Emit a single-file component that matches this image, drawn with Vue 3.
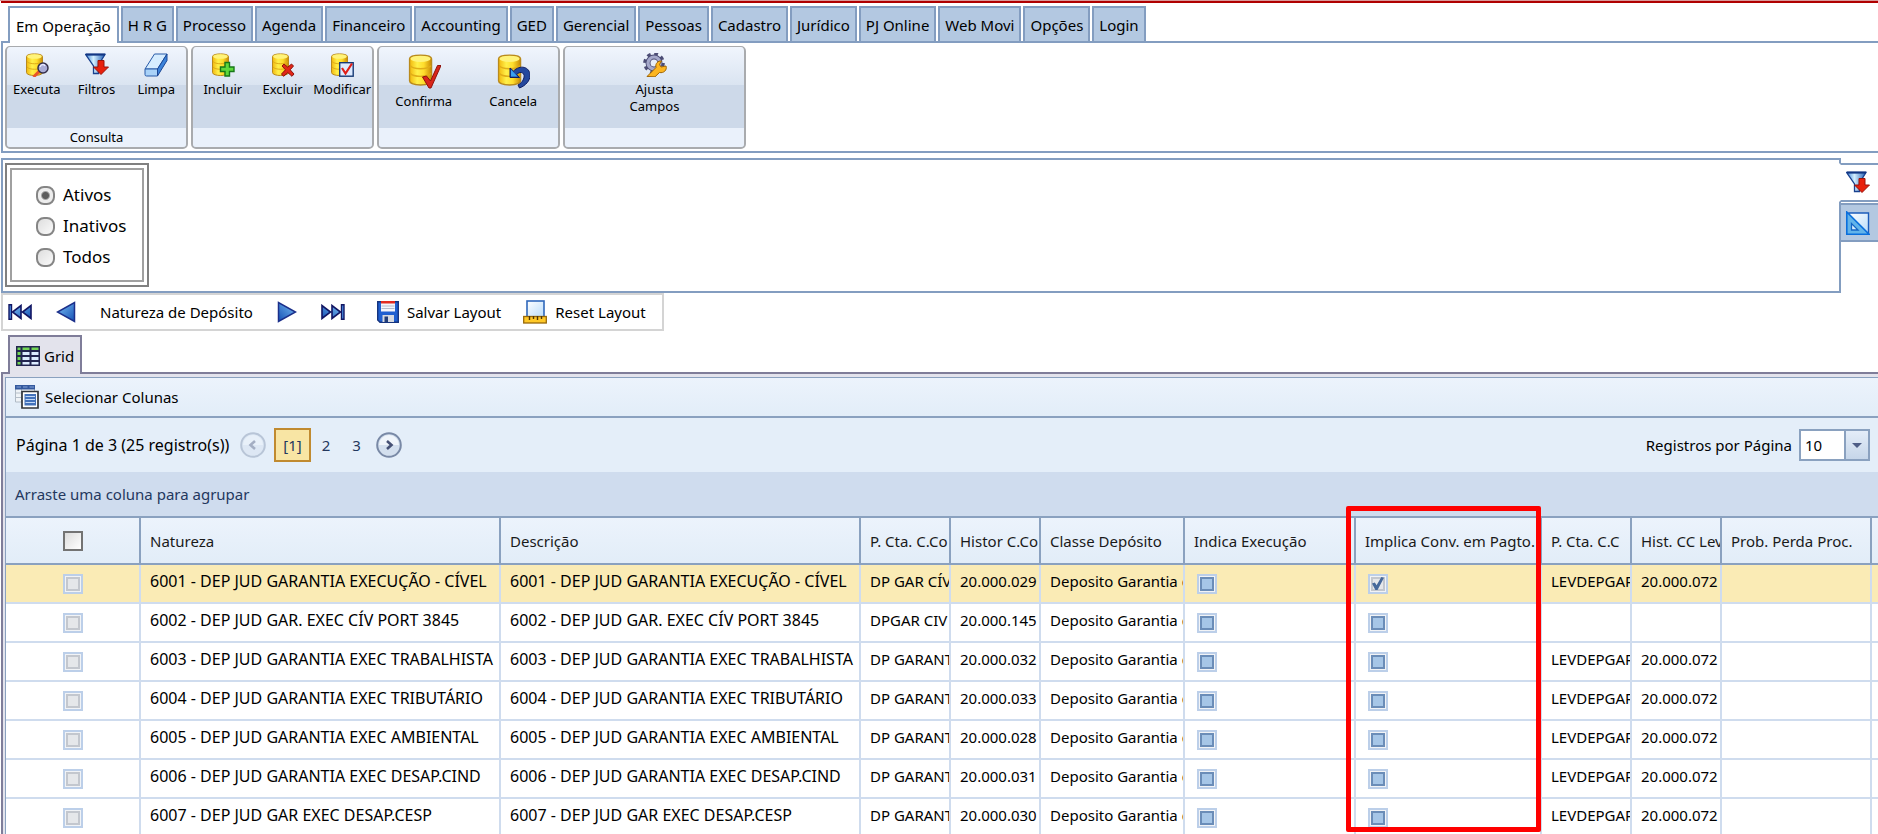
<template>
  <div class="page">
    <svg class="sprite" width="0" height="0" aria-hidden="true">
      <defs>
        <linearGradient id="gold" x1="0" x2="1" y1="0" y2="0">
          <stop offset="0" stop-color="#f2b70d" />
          <stop offset="0.35" stop-color="#fff04a" />
          <stop offset="0.65" stop-color="#ffdd2c" />
          <stop offset="1" stop-color="#c98a05" />
        </linearGradient>
        <linearGradient id="blue" x1="0" x2="1" y1="0" y2="1">
          <stop offset="0" stop-color="#7cc0f5" />
          <stop offset="1" stop-color="#1450b4" />
        </linearGradient>
        <linearGradient id="cone" x1="0" x2="1" y1="0" y2="0">
          <stop offset="0" stop-color="#3f86d8" />
          <stop offset="0.4" stop-color="#d3efff" />
          <stop offset="1" stop-color="#1f5db4" />
        </linearGradient>
        <linearGradient id="sheet" x1="0" x2="1" y1="0" y2="1">
          <stop offset="0" stop-color="#ffffff" />
          <stop offset="1" stop-color="#b9dcfa" />
        </linearGradient>
        <symbol id="i-db" viewBox="0 0 24 24">
          <path d="M1.5 3.500C1.500 0 17.500 0 17.500 3.500V19.500C17.500 23.500 1.500 23.500 1.500 19.500Z" fill="url(#gold)" stroke="#b98a1c" />
          <ellipse cx="9.500" cy="3.500" rx="7.300" ry="2.300" fill="#fff37a" />
          <path d="M2 8.500C4 11.500 15 11.500 17 8.500M2 14C4 17 15 17 17 14" fill="none" stroke="#e0ad18" />
        </symbol>
        <symbol id="i-executa" viewBox="0 0 24 24">
          <use href="#i-db" width="24" height="24" />
          <path d="M8.500 24 15 17.500" stroke="#e8542a" stroke-width="3" />
          <circle cx="18" cy="15" r="5" fill="#a9acd6" stroke="#35304a" stroke-width="1.500" />
          <path d="M15 14c1-3 4-3 5-1" fill="none" stroke="#e6e8ff" stroke-width="1.500" />
        </symbol>
        <symbol id="i-filtros" viewBox="0 0 24 24">
          <path d="M.7 1.500H20L13.500 12V20.500H8.500V13Z" fill="url(#cone)" stroke="#19418f" stroke-width="1.300" />
          <path d="M1 1.500H20" stroke="#123683" stroke-width="2" />
          <path d="M13 7.500h6V14h4.500L16 21.500 8.500 14H13Z" fill="#e8200c" stroke="#98120a" />
        </symbol>
        <symbol id="i-limpa" viewBox="0 0 24 24">
          <path d="M10.500 1H23L13.500 16H1Z" fill="#d5ecff" stroke="#285aa8" />
          <path d="M1 16h12.500v7H2.500Q1 23 1 21.500Z" fill="#a9d2f8" stroke="#285aa8" />
          <path d="M23 1v6.500L13.500 23v-7Z" fill="#3c83da" stroke="#1b4795" />
        </symbol>
        <symbol id="i-incluir" viewBox="0 0 24 24">
          <use href="#i-db" width="24" height="24" />
          <path d="M14 9.500h4.500V14H23v4.500h-4.500V23H14v-4.500H9.500V14H14Z" fill="#5ed83b" stroke="#167818" stroke-width="1.400" />
        </symbol>
        <symbol id="i-excluir" viewBox="0 0 24 24">
          <use href="#i-db" width="24" height="24" />
          <path d="m11 13 2-2 3.800 3.200L20.500 11l2 2-3.300 3.800L23 21l-2 2.300-4.200-3.700-4.300 3.700-2-2.300 4-4.200Z" fill="#e12617" stroke="#8c120b" />
        </symbol>
        <symbol id="i-modificar" viewBox="0 0 24 24">
          <use href="#i-db" width="24" height="24" />
          <rect x="9.700" y="9.700" width="13.500" height="13.500" fill="#dceaff" stroke="#173a75" stroke-width="1.400" />
          <path d="m12 15 3.500 5.500L22 10.500" fill="none" stroke="#e01f18" stroke-width="2.200" />
        </symbol>
        <symbol id="i-confirma" viewBox="0 0 34 34">
          <use href="#i-db" width="34" height="33" />
          <path d="m15.500 23 4-1 4 5L30.500 11.500h3.500L24 34h-2Z" fill="#d9251a" stroke="#8f120c" />
        </symbol>
        <symbol id="i-cancela" viewBox="0 0 34 34">
          <use href="#i-db" width="34" height="33" />
          <path d="M14 14v9.500h9.500l-2.800-3C25 16 30 19.500 27.500 25c-1 3-3 4.500-5.500 6l1.500 3C30 31.500 34 26.500 34 21.500 34 12.500 24 10.500 17.500 17Z" fill="#24489e" stroke="#101f63" />
          <path d="M15 15.500v7h6.500Z" fill="#39a0f1" />
        </symbol>
        <symbol id="i-ajusta" viewBox="0 0 24 24">
          <circle cx="11" cy="10" r="8.800" fill="none" stroke="#4c4d75" stroke-width="4" stroke-dasharray="3.500 3.400" />
          <circle cx="11" cy="10" r="6" fill="none" stroke="#4c4d75" stroke-width="5" />
          <circle cx="11" cy="10" r="6" fill="none" stroke="#a4a8ca" stroke-width="3.200" />
          <path d="M4 23.500 13 14.500c-1-4 2-7 5.500-6.500L16.500 11.500l1.500 2.500 5-1c1.500 4-2.500 7.500-6.500 6.500L12 23.800Z" fill="#fcb520" stroke="#9f6505" />
        </symbol>
        <symbol id="i-first" viewBox="0 0 24 16">
          <path d="M1 .8h2.500v14.400H1Z" fill="#4a92e6" stroke="#121663" stroke-width="1.400" />
          <path d="M13 1.500v13L4.500 8ZM23 1.500v13L14.500 8Z" fill="url(#blue)" stroke="#121663" stroke-width="1.600" />
        </symbol>
        <symbol id="i-prev" viewBox="0 0 20 22">
          <path d="M18.500 1.500v19L1.500 11Z" fill="url(#blue)" stroke="#1b2f8a" stroke-width="1.500" />
        </symbol>
        <symbol id="i-save" viewBox="0 0 22 22">
          <path d="M.7.7h20.600v20.600H3L.7 19Z" fill="#1f5fd0" stroke="#16347e" stroke-width="1.400" />
          <path d="M4 2h14v8.500H4Z" fill="#f3f5fb" />
          <path d="M4 0h14v2.500H4Z" fill="#e22a20" />
          <path d="M4.500 5h13M4.500 7.500h13" stroke="#b5bbcc" />
          <path d="M5.500 14h11.500v7H5.500Z" fill="#d5d9e0" />
          <path d="M7.500 15.500h3.500V21H7.500Z" fill="#223d78" />
        </symbol>
        <symbol id="i-reset" viewBox="0 0 24 24">
          <rect x="4" y="1" width="17" height="16" fill="url(#sheet)" stroke="#3068bb" stroke-width="1.600" />
          <rect x=".7" y="16.500" width="22.600" height="6.500" fill="#ffc928" stroke="#98690a" stroke-width="1.300" />
          <path d="M6.500 16v4M10.500 16v3M14.500 16v4M18.500 16v3" stroke="#4e3508" stroke-width="1.400" />
        </symbol>
        <symbol id="i-grid" viewBox="0 0 24 20">
          <path d="M0 0h24v20H0Z" fill="#22254f" />
          <path d="M1.500 1.500h3V4h-3Zm0 4.500h3v3h-3Zm0 5h3v3h-3Zm0 5h3v2.500h-3ZM6.500 1.500h7V4h-7Zm9 0h7V4h-7Z" fill="#72d455" />
          <path d="M6.500 6h7v3h-7Zm9 0h7v3h-7Zm-9 5h7v3h-7Zm9 0h7v3h-7Zm-9 5h7v2.500h-7Zm9 0h7v2.500h-7Z" fill="#dcecff" />
        </symbol>
        <symbol id="i-cols" viewBox="0 0 24 24">
          <path d="M.5.500h19V17H.5Z" fill="#eff3f7" stroke="#b0bac5" />
          <path d="M.5 8h19M.5 12.500h19M6.500 4v13" stroke="#b5bfca" />
          <path d="M0 0h20v4.500H0Z" fill="#34599d" />
          <path d="M1.500 2H6m2 0h4.500m2 0H19" stroke="#86a6db" />
          <path d="M7 6.500h16V23H7Z" fill="#ffffff" stroke="#30343a" stroke-width="1.700" />
          <path d="M9.500 9h11.500v11.500H9.500Z" fill="#4372ba" />
          <path d="M10.500 11.500h9.500m-9.500 3h9.500m-9.500 3h9.500" stroke="#c3d9f8" />
        </symbol>
        <symbol id="i-ruler" viewBox="0 0 24 24">
          <path d="M3 2h19.500v20H3Z" fill="url(#sheet)" stroke="#1c5cbb" stroke-width="1.400" />
          <path d="M.8 1v22.200H23Z" fill="#62b4ea" stroke="#0a6fdc" stroke-width="1.600" />
          <path d="M5.500 12.500v6.500h6.500Z" fill="#d9effe" stroke="#1565c4" stroke-width="1.300" />
        </symbol>
        <symbol id="i-arrow" viewBox="0 0 26 26">
          <circle cx="13" cy="13" r="11.800" fill="#d3dfee" stroke="#7989a6" stroke-width="2" />
          <path d="M3 13a10 10 0 0 1 20 0Z" fill="#f0f5fb" />
          <path d="m11 9 4.500 4-4.500 4" fill="none" stroke="#465175" stroke-width="2.600" />
        </symbol>
      </defs>
    </svg>

    <nav class="tabs">
      <button
        v-for="(tab, index) in tabs"
        :key="tab"
        type="button"
        class="tab"
        :class="{ active: index === activeTab }"
        @click="activeTab = index"
      >{{ tab }}</button>
    </nav>

    <div class="ribbon">
      <section v-for="(group, index) in groups" :key="index" class="ribbon-group">
        <div class="ribbon-items">
          <button
            v-for="item in group.items"
            :key="item.label"
            type="button"
            class="ribbon-item"
            :class="{ large: group.large }"
          >
            <svg class="ribbon-icon" aria-hidden="true"><use :href="'#i-' + item.icon" /></svg>
            <span>{{ item.label }}</span>
          </button>
        </div>
        <div class="ribbon-title">{{ group.title }}</div>
      </section>
    </div>

    <div class="filter">
      <div class="filter-body">
        <div class="filter-frame">
          <div class="filter-options">
            <label v-for="option in options" :key="option" class="option">
              <input v-model="situation" type="radio" name="situation" :value="option">
              <span>{{ option }}</span>
            </label>
          </div>
        </div>
      </div>
      <div class="side-tabs">
        <button type="button" class="side-tab active" aria-label="Filtros">
          <svg width="24" height="24"><use href="#i-filtros" /></svg>
        </button>
        <button type="button" class="side-tab" aria-label="Layout">
          <svg width="24" height="24"><use href="#i-ruler" /></svg>
        </button>
      </div>
    </div>

    <div class="navigator">
      <button type="button" aria-label="Primeiro"><svg width="24" height="16"><use href="#i-first" /></svg></button>
      <button type="button" aria-label="Anterior"><svg width="20" height="22"><use href="#i-prev" /></svg></button>
      <span class="nav-title">Natureza de Depósito</span>
      <button type="button" aria-label="Próximo"><svg class="flip" width="20" height="22"><use href="#i-prev" /></svg></button>
      <button type="button" aria-label="Último"><svg class="flip" width="24" height="16"><use href="#i-first" /></svg></button>
      <div class="nav-actions">
        <button type="button" class="nav-action">
          <svg width="22" height="22"><use href="#i-save" /></svg>
          <span>Salvar Layout</span>
        </button>
        <button type="button" class="nav-action">
          <svg width="24" height="24"><use href="#i-reset" /></svg>
          <span>Reset Layout</span>
        </button>
      </div>
    </div>

    <button type="button" class="grid-tab">
      <svg width="24" height="20"><use href="#i-grid" /></svg>
      <span>Grid</span>
    </button>

    <div class="grid-panel">
      <div class="grid">
        <div class="toolbar">
          <button type="button">
            <svg width="24" height="24"><use href="#i-cols" /></svg>
            <span>Selecionar Colunas</span>
          </button>
        </div>

        <div class="pager">
          <span class="pager-info">Página 1 de 3 (25 registro(s))</span>
          <button type="button" class="round" aria-label="Página anterior" disabled>
            <svg class="flip" width="26" height="26"><use href="#i-arrow" /></svg>
          </button>
          <a href="#" class="page-link current">[1]</a>
          <a href="#" class="page-link">2</a>
          <a href="#" class="page-link">3</a>
          <button type="button" class="round" aria-label="Próxima página">
            <svg width="26" height="26"><use href="#i-arrow" /></svg>
          </button>
          <label class="page-size-label" for="page-size">Registros por Página</label>
          <div class="page-size">
            <select id="page-size" v-model="pageSize">
              <option v-for="size in [10, 25, 50]" :key="size" :value="size">{{ size }}</option>
            </select>
            <span class="page-size-arrow"></span>
          </div>
        </div>

        <div class="group-panel">Arraste uma coluna para agrupar</div>

        <div class="table-area">
          <table>
            <colgroup>
              <col class="w-select">
              <col class="w-name">
              <col class="w-name">
              <col class="w-code">
              <col class="w-code">
              <col class="w-class">
              <col class="w-exec">
              <col class="w-conv">
              <col class="w-code">
              <col class="w-code">
              <col class="w-prob">
              <col>
            </colgroup>
            <thead>
              <tr>
                <th class="select-cell"><input type="checkbox" class="check-all" aria-label="Selecionar todos"></th>
                <th v-for="column in columns" :key="column" scope="col">{{ column }}</th>
                <th></th>
              </tr>
            </thead>
            <tbody>
              <tr v-for="(row, index) in rows" :key="row.name" :class="{ focused: index === 0 }">
                <td class="select-cell"><input type="checkbox" class="check" :aria-label="'Selecionar ' + row.name"></td>
                <td class="name-cell">{{ row.name }}</td>
                <td class="name-cell">{{ row.name }}</td>
                <td>{{ row.account }}</td>
                <td>{{ row.history }}</td>
                <td>Deposito Garantia d</td>
                <td class="check-cell"><input type="checkbox" class="check" :indeterminate="true" aria-label="Indica Execução"></td>
                <td class="check-cell">
                  <input
                    type="checkbox"
                    class="check"
                    :checked="row.converts"
                    :indeterminate="!row.converts"
                    aria-label="Implica Conv. em Pagto."
                  >
                </td>
                <td>{{ row.releaseAccount }}</td>
                <td>{{ row.releaseHistory }}</td>
                <td></td>
                <td></td>
              </tr>
            </tbody>
          </table>
          <div class="highlight"></div>
        </div>
      </div>
    </div>
  </div>
</template>

<script setup>
import { ref } from 'vue'

const activeTab = ref(0)
const situation = ref('Ativos')
const pageSize = ref(10)

const tabs = [
  'Em Operação', 'H R G', 'Processo', 'Agenda', 'Financeiro', 'Accounting', 'GED', 'Gerencial',
  'Pessoas', 'Cadastro', 'Jurídico', 'PJ Online', 'Web Movi', 'Opções', 'Login'
]

const options = ['Ativos', 'Inativos', 'Todos']

const groups = [
  {
    title: 'Consulta',
    items: [
      { label: 'Executa', icon: 'executa' },
      { label: 'Filtros', icon: 'filtros' },
      { label: 'Limpa', icon: 'limpa' }
    ]
  },
  {
    title: '',
    items: [
      { label: 'Incluir', icon: 'incluir' },
      { label: 'Excluir', icon: 'excluir' },
      { label: 'Modificar', icon: 'modificar' }
    ]
  },
  {
    title: '',
    large: true,
    items: [
      { label: 'Confirma', icon: 'confirma' },
      { label: 'Cancela', icon: 'cancela' }
    ]
  },
  {
    title: '',
    items: [{ label: 'Ajusta\nCampos', icon: 'ajusta' }]
  }
]

const columns = [
  'Natureza', 'Descrição', 'P. Cta. C.Co', 'Histor C.Co', 'Classe Depósito', 'Indica Execução',
  'Implica Conv. em Pagto.', 'P. Cta. C.C', 'Hist. CC Lev', 'Prob. Perda Proc.'
]

const makeRow = (name, account, history, converts = false, released = true) => ({
  name,
  account,
  history,
  converts,
  releaseAccount: released ? 'LEVDEPGAR' : '',
  releaseHistory: released ? '20.000.072' : ''
})

const rows = [
  makeRow('6001 - DEP JUD GARANTIA EXECUÇÃO - CÍVEL', 'DP GAR CÍV', '20.000.029', true),
  makeRow('6002 - DEP JUD GAR. EXEC CÍV PORT 3845', 'DPGAR CIV', '20.000.145', false, false),
  makeRow('6003 - DEP JUD GARANTIA EXEC TRABALHISTA', 'DP GARANT', '20.000.032'),
  makeRow('6004 - DEP JUD GARANTIA EXEC TRIBUTÁRIO', 'DP GARANT', '20.000.033'),
  makeRow('6005 - DEP JUD GARANTIA EXEC AMBIENTAL', 'DP GARANT', '20.000.028'),
  makeRow('6006 - DEP JUD GARANTIA EXEC DESAP.CIND', 'DP GARANT', '20.000.031'),
  makeRow('6007 - DEP JUD GAR EXEC DESAP.CESP', 'DP GARANT', '20.000.030')
]
</script>

<style>
body {
  margin: 0;
  background: #ffffff;
}
</style>

<style scoped>
.page {
  box-sizing: border-box;
  height: 100vh;
  overflow: hidden;
  padding-left: 1px;
  border-top: 1px solid #d99a9a;
  background: #ffffff;
  color: #000000;
  font-family: Tahoma, "Noto Sans", sans-serif;
  font-size: 15px;
  line-height: 20px;
}

.page *,
.page *::before {
  box-sizing: border-box;
}

.sprite {
  position: absolute;
}

button {
  border: 0;
  padding: 0;
  background: none;
  color: inherit;
  cursor: pointer;
  font: inherit;
}

svg {
  display: block;
  flex: none;
}

.flip {
  transform: scaleX(-1);
}

.tabs {
  display: flex;
  gap: 2px;
  padding: 3px 0 0 7px;
  border-top: 2px solid #b00000;
  border-bottom: 2px solid #839dc0;
}

.tab {
  height: 35px;
  border: 2px solid #839dc0;
  border-bottom: 0;
  padding: 0 5px;
  background: #b3c8e1;
  white-space: nowrap;
}

.tab.active {
  position: relative;
  height: 37px;
  margin-bottom: -2px;
  padding: 0 6px;
  background: #ffffff;
}

.ribbon {
  display: flex;
  gap: 3px;
  padding: 3px 2px 2px;
  border-bottom: 2px solid #839dc0;
  border-left: 2px solid #839dc0;
}

.ribbon-group {
  width: 183px;
  overflow: hidden;
  border: 2px solid #a9abae;
  border-top-width: 1px;
  border-radius: 5px;
  background: linear-gradient(#f0f5fd, #dae4f1 38px, #cdd9e9 38px);
  font-size: 13px;
  line-height: 17px;
}

.ribbon-items {
  display: flex;
  height: 81px;
}

.ribbon-item {
  display: flex;
  flex: 1 1 0;
  min-width: 0;
  flex-direction: column;
  align-items: center;
  padding-top: 6px;
  white-space: pre;
}

.ribbon-icon {
  width: 24px;
  height: 24px;
  margin-bottom: 4px;
}

.large .ribbon-icon {
  width: 34px;
  height: 36px;
}

.ribbon-title {
  height: 19px;
  background: #eaf1fb;
  line-height: 19px;
  text-align: center;
}

.filter {
  display: flex;
  margin-top: 5px;
}

.filter-body {
  flex: 1;
  padding: 3px 2px 4px;
  border: 2px solid #839dc0;
}

.filter-frame {
  width: 144px;
  padding: 3px;
  border: 2px solid #808080;
}

.filter-options {
  display: grid;
  gap: 11px;
  padding: 15px 24px 13px;
  border: 2px solid #a0a0a0;
  font-size: 17px;
}

.option {
  display: flex;
  align-items: center;
  gap: 8px;
}

.option input {
  flex: none;
  width: 19px;
  height: 19px;
  margin: 0;
  border: 2px solid #858585;
  border-radius: 8px;
  appearance: none;
  background: linear-gradient(135deg, #dedede, #fafafa);
}

.option input:checked {
  background: radial-gradient(circle, #5c5c5c 3px, #ededed 5px);
}

.side-tabs {
  display: grid;
  flex: 0 0 39px;
  align-content: start;
  gap: 1px;
  margin-left: -2px;
  padding-top: 5px;
}

.side-tab {
  position: relative;
  height: 39px;
  padding-left: 5px;
  border: 2px solid #839dc0;
  border-right: 0;
  background: #b3c8e1;
}

.side-tab.active {
  border-left-color: #ffffff;
  background: #ffffff;
}

.navigator {
  display: flex;
  align-items: center;
  width: max-content;
  height: 38px;
  padding: 0 16px 0 5px;
  border: 2px solid #d4d4d4;
  gap: 24px;
}

.nav-title {
  white-space: nowrap;
}

.nav-actions {
  display: flex;
  gap: 22px;
  margin-left: 8px;
}

.nav-action {
  display: flex;
  align-items: center;
  gap: 8px;
  white-space: nowrap;
}

.grid-tab {
  position: relative;
  display: flex;
  align-items: center;
  gap: 4px;
  height: 39px;
  margin: 4px 0 -2px 7px;
  padding: 0 6px;
  border: 2px solid #7f7d99;
  border-bottom: 0;
  background: #e3e3ec;
}

.grid-panel {
  padding: 3px 0 0 2px;
  border-top: 2px solid #7f7d99;
  border-left: 2px solid #7f7d99;
  background: #e3e3ec;
}

.grid {
  border-top: 1px solid #8aa1bf;
  border-left: 1px solid #8aa1bf;
}

.toolbar {
  padding: 7px 9px;
  border-bottom: 2px solid #8aa1bf;
  background: linear-gradient(#ecf3fc, #e2edf8);
}

.toolbar button {
  display: flex;
  align-items: center;
  gap: 6px;
}

.pager {
  display: flex;
  align-items: center;
  height: 54px;
  padding: 0 8px 0 10px;
  background: #e4eef9;
}

.pager-info {
  margin-right: 11px;
  font-size: 16px;
}

.round:disabled {
  opacity: 0.4;
}

.page-link {
  padding: 5px 11px;
  color: #24385e;
  text-decoration: none;
}

.page-link.current {
  margin-left: 8px;
  padding: 5px 7px;
  border: 2px solid #c08a30;
  background: #f8e5a4;
}

.page-link + .round {
  margin-left: 4px;
}

.page-size-label {
  margin-left: auto;
}

.page-size {
  position: relative;
  width: 71px;
  margin-left: 7px;
}

.page-size select {
  display: block;
  width: 100%;
  height: 32px;
  padding: 0 4px;
  border: 2px solid #8aa1bf;
  border-radius: 0;
  appearance: none;
  background: #ffffff;
  color: #000000;
  font: inherit;
}

.page-size-arrow {
  position: absolute;
  top: 2px;
  right: 2px;
  width: 24px;
  height: 28px;
  border-left: 2px solid #8aa1bf;
  background: linear-gradient(#e4edf8, #c6d6e9);
  pointer-events: none;
}

.page-size-arrow::after {
  content: '';
  position: absolute;
  top: 12px;
  left: 6px;
  border: 5px solid transparent;
  border-top-color: #4e5d85;
  border-bottom: 0;
}

.group-panel {
  padding: 12px 9px;
  background: #cfdcee;
  color: #24385e;
}

.table-area {
  position: relative;
}

table {
  width: 100%;
  border-spacing: 0;
  background: #ffffff;
  table-layout: fixed;
}

.w-select {
  width: 135px;
}

.w-name {
  width: 360px;
}

.w-code {
  width: 90px;
}

.w-class {
  width: 144px;
}

.w-exec {
  width: 171px;
}

.w-conv {
  width: 186px;
}

.w-prob {
  width: 150px;
}

th,
td {
  overflow: hidden;
  padding: 0 0 0 9px;
  text-align: left;
  white-space: nowrap;
}

th {
  height: 49px;
  border: solid #8aa1bf;
  border-width: 2px 2px 2px 0;
  background: linear-gradient(#ecf3fc, #e2edf8);
  color: #1a1a1a;
  font-weight: 400;
}

td {
  height: 39px;
  padding-top: 6px;
  border: solid #cfdcee;
  border-width: 0 2px 2px 0;
  vertical-align: top;
}

th:last-child,
td:last-child {
  padding: 0;
  border-right: 0;
}

.focused td {
  background: #faebb5;
}

.name-cell {
  font-size: 16px;
}

.select-cell {
  padding-left: 0;
  text-align: center;
}

td.select-cell,
.check-cell {
  padding-top: 9px;
}

.check-cell {
  padding-left: 12px;
}

.check,
.check-all {
  display: inline-block;
  width: 20px;
  height: 20px;
  margin: 0;
  appearance: none;
  vertical-align: top;
}

.check-all {
  border: 2px solid #737373;
  background: linear-gradient(135deg, #dcdcdc, #ffffff);
}

.check {
  position: relative;
  padding: 1px;
  border: 2px solid #bccfe9;
  background: #f1f3f6;
}

.check::before {
  content: '';
  display: block;
  width: 14px;
  height: 14px;
  border: 2px solid #c3c7ce;
  background: #e5e7ea;
}

.check:indeterminate::before {
  border-color: #6b8db8;
  background: #a6c6e7;
}

.check:checked::after {
  content: '';
  position: absolute;
  top: 1px;
  left: 2px;
  width: 12px;
  height: 13px;
  background: #46699b;
  clip-path: polygon(0 50%, 24% 42%, 38% 64%, 78% 0, 100% 6%, 46% 100%, 28% 100%);
}

.highlight {
  position: absolute;
  top: -10px;
  left: 1340px;
  width: 195px;
  height: 326px;
  border: 5px solid #ff0000;
  border-radius: 2px;
  pointer-events: none;
}
</style>
